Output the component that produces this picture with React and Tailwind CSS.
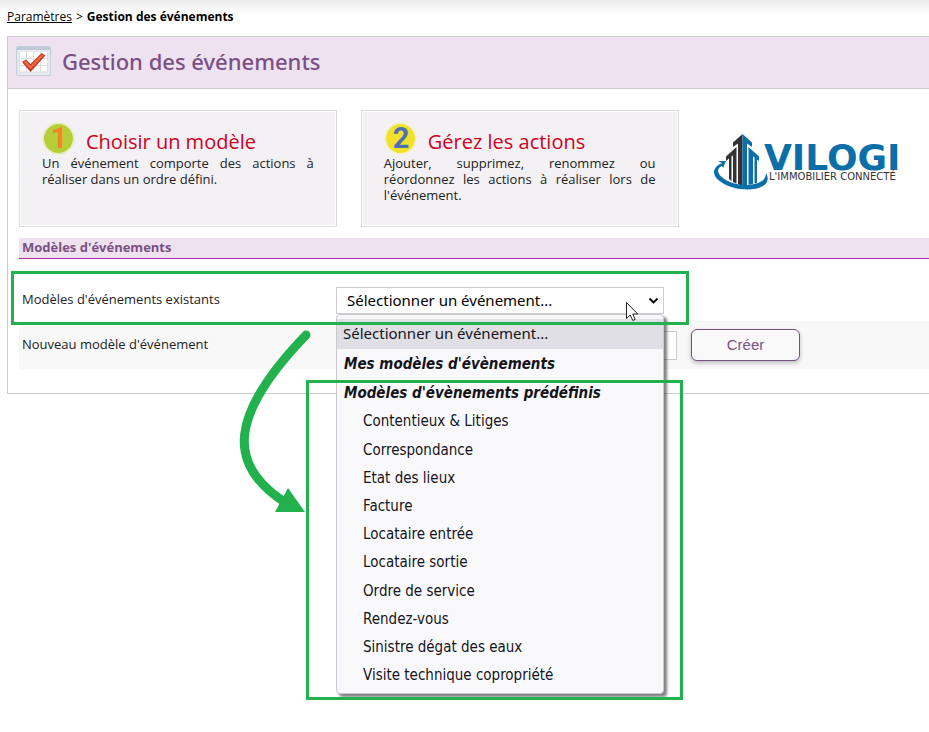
import { useState } from 'react';

const PLACEHOLDER = 'Sélectionner un événement...';

const PRESET_MODELS = [
  'Contentieux & Litiges',
  'Correspondance',
  'Etat des lieux',
  'Facture',
  'Locataire entrée',
  'Locataire sortie',
  'Ordre de service',
  'Rendez-vous',
  'Sinistre dégat des eaux',
  'Visite technique copropriété',
];

const STEPS = [
  {
    number: '1',
    title: 'Choisir un modèle',
    text: 'Un événement comporte des actions à réaliser dans un ordre défini.',
    disc: '#b6cf38',
    ring: '#dbe8a0',
    digit: '#f58426',
  },
  {
    number: '2',
    title: 'Gérez les actions',
    text: "Ajouter, supprimez, renommez ou réordonnez les actions à réaliser lors de l'événement.",
    disc: '#f1e12a',
    ring: '#f6efa6',
    digit: '#4d70b3',
  },
];

function CalendarCheckIcon() {
  return (
    <svg width="36" height="31" viewBox="0 0 36 31" aria-hidden="true">
      <rect x="0.5" y="0.5" width="34" height="29" rx="1" fill="#e6ebf0" stroke="#c3ced8" />
      <rect x="1" y="1" width="33" height="3" fill="#becbd6" />
      <rect x="3" y="6" width="29" height="20" fill="#fff" />
      <path d="M3.500 6v20M10.500 6v20M17.500 6v20M24.500 6v20M31.500 6v20M3 12.500h29M3 19.500h29M3 26h29" stroke="#dcdee1" fill="none" />
      <path d="M6 16l4-2.500 4.500 4.500L25.500 7l4 2.500-15 16.500z" fill="#c93c22" />
      <path d="M7.500 16l2.500-1.200 4.500 5.200 11-11.500 2 1.200L14.500 23z" fill="#ef6a48" />
    </svg>
  );
}

function StepBadge({ step }) {
  return (
    <svg width="33" height="33" viewBox="0 0 33 33" className="shrink-0" aria-hidden="true">
      <circle cx="16.500" cy="16.500" r="15.500" fill="#fafaf2" stroke={step.ring} />
      <circle cx="16.500" cy="16.500" r="14.500" fill={step.disc} />
      <text
        x="17"
        y="26"
        textAnchor="middle"
        fontSize="29"
        fontWeight="700"
        fill={step.digit}
        className="font-['Roboto',sans-serif]"
      >
        {step.number}
      </text>
    </svg>
  );
}

function StepCard({ step }) {
  return (
    <section className="h-[117px] border border-[#dcdcdc] bg-[#f4f1f5] px-[22px] pt-[11px] shadow-[inset_0_0_0_1px_#fff]">
      <div className="flex h-[33px] items-start gap-[11px]">
        <StepBadge step={step} />
        <h2 className="pt-[6px] text-[20px] leading-[28px] text-[#cf0022]">{step.title}</h2>
      </div>
      <p className="text-justify text-[13px] leading-[16px] text-[#222]">{step.text}</p>
    </section>
  );
}

function VilogiLogo() {
  return (
    <svg width="192" height="62" viewBox="0 0 192 62" role="img" aria-label="Vilogi">
      {/* towers */}
      <path d="M29.500 4L20 12.500V17l5-3.500V54l4.500 2z" fill="#323234" />
      <path d="M23.500 17L13 26.500V31l3-2.500V49l2.500 2V26.500l1.500-1.200V52l3.500 1.500z" fill="#323234" />
      <path d="M29.500 4L39 12.500V17l-5-3.500V55l-4.500 1z" fill="#0a6ea8" />
      <path d="M35.500 17L46 26.500V31l-2-1.500V53l-2.500.500V27.500L40 26.300V54l-4.500.700z" fill="#0a6ea8" />
      {/* ring */}
      <path
        d="M9 33C-2 38-1 46 8 52c11 8 32 10 42 4 5-3 6-8 3-13 0 8-8 12-20 12C19 55 6 48 5 41c0-2 1-4 4-5l1 2 3-7-8 0z"
        fill="#0a6ea8"
      />
      <text className="font-['DejaVu_Sans',sans-serif]">
        <tspan x="51" y="40" fontSize="36" fontWeight="700" fill="#0a6ea8">
          VILOGI
        </tspan>
        <tspan x="56" y="50" fontSize="10" fill="#323234">
          L'IMMOBILIER CONNECTÉ
        </tspan>
      </text>
    </svg>
  );
}

function ModelMenu({ onPick }) {
  return (
    <div
      role="listbox"
      aria-label="Modèles d'événements existants"
      className="absolute top-full left-0 z-10 w-full rounded-[4px] border border-[#c9c8d2] bg-[#f9f9fc] pt-1 pb-[3px] text-[15px] text-[#15141a] shadow-[3px_3px_3px_rgba(0,0,0,0.5)]"
    >
      <div
        role="option"
        aria-selected="true"
        className="h-[30px] bg-[#e0dfe6] px-[6px] font-['Noto_Sans',sans-serif] leading-[28px]"
        onClick={() => onPick('')}
      >
        {PLACEHOLDER}
      </div>
      <div className="px-[7px] pt-px font-['DejaVu_Sans_Condensed','DejaVu_Sans',sans-serif] leading-[29px] font-bold italic">
        <div>Mes modèles d'évènements</div>
        <div>Modèles d'évènements prédéfinis</div>
      </div>
      <ul className="flex h-[282px] flex-col font-['DejaVu_Sans_Condensed','Noto_Sans',sans-serif]">
        {PRESET_MODELS.map((m) => (
          <li
            key={m}
            role="option"
            aria-selected="false"
            className="flex flex-1 items-center pl-[26px]"
            onClick={() => onPick(m)}
          >
            {m}
          </li>
        ))}
      </ul>
    </div>
  );
}

// Green boxes and arrow laid over the form, plus the mouse pointer
function Annotations() {
  return (
    <div className="pointer-events-none absolute inset-0 z-20">
      <div className="absolute top-[271px] left-[11px] h-[54px] w-[678px] border-3 border-[#22b14c]" />
      <div className="absolute top-[380px] left-[306px] h-[320px] w-[377px] border-3 border-[#22b14c]" />
      <svg className="absolute top-[320px] left-[230px]" width="90" height="200" viewBox="230 320 90 200">
        <path d="M306 335C229 415 226 465 286 503" fill="none" stroke="#22b14c" strokeWidth="9" strokeLinecap="round" />
        <path d="M305 512l-17-24-13 24z" fill="#22b14c" />
      </svg>
      <svg className="absolute top-[301px] left-[625px]" width="14" height="21" viewBox="0 0 14 21">
        <path
          d="M1.500 1.500v16l3.700-3.500 2.600 5.500 2.400-1.200-2.500-5.300h5z"
          fill="#fff"
          stroke="#222"
          strokeLinejoin="round"
        />
      </svg>
    </div>
  );
}

export default function App() {
  const [model, setModel] = useState('');
  const [name, setName] = useState('');

  return (
    <div className="relative min-h-screen overflow-hidden bg-white bg-linear-to-b from-[#ebebeb] to-white to-[14px] pl-[7px] font-['Open_Sans','Noto_Sans',sans-serif] text-[13px] text-[#222]">
      <nav className="flex h-[36px] items-center gap-1 pb-[3px] text-[12px] text-black">
        <a href="#parametres" className="underline">
          Paramètres
        </a>
        <span>&gt;</span>
        <b>Gestion des événements</b>
      </nav>

      <main className="border border-r-0 border-[#ccc] bg-white">
        <header className="flex h-[52px] items-center gap-[10px] border-b border-[#ccc] bg-[#efe2f0] pb-[2px] pl-2">
          <CalendarCheckIcon />
          <h1 className="font-['Noto_Sans',sans-serif] text-[22px] font-medium text-[#7a5084]">
            Gestion des événements
          </h1>
        </header>

        <div className="pt-[21px] pb-6 pl-[11px]">
          <div className="grid grid-cols-[10fr_10fr_7fr] gap-6 pr-1">
            {STEPS.map((s) => (
              <StepCard key={s.number} step={s} />
            ))}
            <div className="pt-5 pl-[10px]">
              <VilogiLogo />
            </div>
          </div>

          <h2 className="mt-[11px] h-[21px] border-b border-[#b02ba0] bg-[#efe2f0] pl-[3px] text-[13px] leading-[18px] font-bold text-[#7a5084]">
            Modèles d'événements
          </h2>

          <form onSubmit={(e) => e.preventDefault()} className="pt-5">
            <div className="flex h-[42px] items-center">
              <label htmlFor="model" className="w-[317px] shrink-0 pl-[3px]">
                Modèles d'événements existants
              </label>
              <div className="relative w-[328px]">
                <select
                  id="model"
                  value={model}
                  onChange={(e) => setModel(e.target.value)}
                  className="block h-[27px] w-full appearance-none border border-[#ccc] bg-white pl-[10px] font-['Noto_Sans',sans-serif] text-[15px] text-black"
                >
                  <option value="">{PLACEHOLDER}</option>
                  {PRESET_MODELS.map((m) => (
                    <option key={m}>{m}</option>
                  ))}
                </select>
                <svg
                  className="pointer-events-none absolute top-[10px] right-[5px]"
                  width="11"
                  height="8"
                  viewBox="0 0 11 8"
                  aria-hidden="true"
                >
                  <path d="M1.500 1.500l4 4 4-4" fill="none" stroke="#000" strokeWidth="1.800" />
                </svg>
                <ModelMenu onPick={setModel} />
              </div>
            </div>

            <div className="flex h-[48px] items-center bg-[#f8f8f8]">
              <label htmlFor="name" className="w-[317px] shrink-0 pl-[3px]">
                Nouveau modèle d'événement
              </label>
              <input
                id="name"
                value={name}
                onChange={(e) => setName(e.target.value)}
                className="h-[29px] w-[341px] border border-[#ccc] bg-white px-2"
              />
              <button className="ml-[14px] h-[32px] w-[109px] rounded-[6px] border border-[#7a5084] bg-[#f9f9f9] font-['Liberation_Sans',Arial,sans-serif] text-[15px] text-[#7a5084] shadow-[0_2px_4px_rgba(0,0,0,0.25)]">
                Créer
              </button>
            </div>
          </form>
        </div>
      </main>

      <Annotations />
    </div>
  );
}
